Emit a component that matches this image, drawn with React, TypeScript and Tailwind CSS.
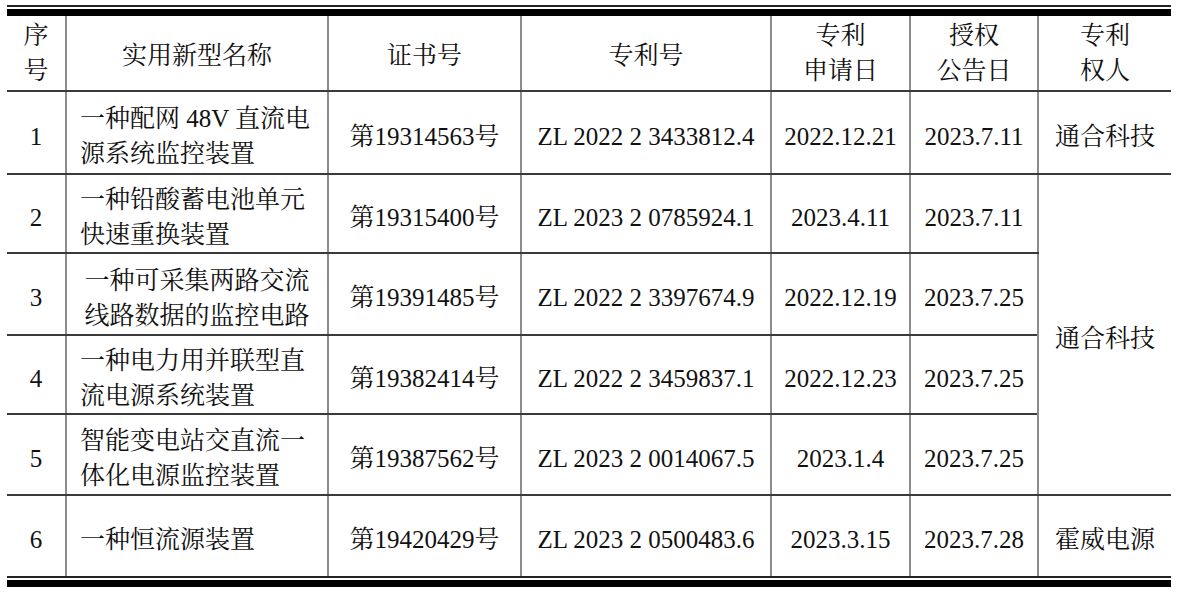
import React from 'react'

const rows = [
  {
    no: '1',
    name: ['一种配网 48V 直流电', '源系统监控装置'],
    cert: '第19314563号',
    patent: 'ZL 2022 2 3433812.4',
    apply: '2022.12.21',
    grant: '2023.7.11',
    h: 'h-[83px]',
  },
  {
    no: '2',
    name: ['一种铅酸蓄电池单元', '快速重换装置'],
    cert: '第19315400号',
    patent: 'ZL 2023 2 0785924.1',
    apply: '2023.4.11',
    grant: '2023.7.11',
    h: 'h-[79px]',
  },
  {
    no: '3',
    name: ['一种可采集两路交流', '线路数据的监控电路'],
    cert: '第19391485号',
    patent: 'ZL 2022 2 3397674.9',
    apply: '2022.12.19',
    grant: '2023.7.25',
    h: 'h-[82px]',
    center: true,
  },
  {
    no: '4',
    name: ['一种电力用并联型直', '流电源系统装置'],
    cert: '第19382414号',
    patent: 'ZL 2022 2 3459837.1',
    apply: '2022.12.23',
    grant: '2023.7.25',
    h: 'h-[79px]',
  },
  {
    no: '5',
    name: ['智能变电站交直流一', '体化电源监控装置'],
    cert: '第19387562号',
    patent: 'ZL 2023 2 0014067.5',
    apply: '2023.1.4',
    grant: '2023.7.25',
    h: 'h-[81px]',
  },
  {
    no: '6',
    name: ['一种恒流源装置'],
    cert: '第19420429号',
    patent: 'ZL 2023 2 0500483.6',
    apply: '2023.3.15',
    grant: '2023.7.28',
    h: 'h-[81px]',
  },
]

// vertical rules are grey, horizontal ones darker
const cell =
  'p-0 align-middle text-center border-y-[2px] border-y-[#3a3a3a] border-x-[2px] border-x-[#8c8c8c]'
const td = `${cell} pt-[7px]`

export default function App() {
  return (
    <div
      className="min-h-[593px] w-[1190px] bg-white text-[#111] pt-[5px] pl-[7px]"
      style={{ fontFamily: '"Liberation Serif", "Noto Serif CJK SC", "Noto Sans CJK SC", serif' }}
    >
      <div className="w-[1164px]">
        {/* top double rule */}
        <div className="h-[2px] bg-[#222]" />
        <div className="h-[2px]" />
        <div className="h-[7px] bg-black" />

        <table className="w-[1164px] table-fixed border-collapse border-hidden text-[25px] leading-[35px]">
          <colgroup>
            <col className="w-[59px]" />
            <col className="w-[262px]" />
            <col className="w-[193px]" />
            <col className="w-[250px]" />
            <col className="w-[139px]" />
            <col className="w-[128px]" />
            <col className="w-[133px]" />
          </colgroup>
          <thead>
            <tr className="h-[75px]">
              <th className={`${cell} font-normal`}>
                序<br />号
              </th>
              <th className={`${cell} pt-[5px] font-normal`}>实用新型名称</th>
              <th className={`${cell} pt-[5px] font-normal`}>证书号</th>
              <th className={`${cell} pt-[5px] font-normal`}>专利号</th>
              <th className={`${cell} font-normal`}>
                专利<br />申请日
              </th>
              <th className={`${cell} font-normal`}>
                授权<br />公告日
              </th>
              <th className={`${cell} font-normal`}>
                专利<br />权人
              </th>
            </tr>
          </thead>
          <tbody>
            {rows.map((r, i) => (
              <tr key={r.no} className={r.h}>
                <td className={td}>{r.no}</td>
                <td className={`${td} ${r.center ? 'text-center' : 'text-left pl-[13px]'}`}>
                  {r.name.map((l) => (
                    <div key={l}>{l}</div>
                  ))}
                </td>
                <td className={td}>{r.cert}</td>
                <td className={td}>{r.patent}</td>
                <td className={td}>{r.apply}</td>
                <td className={td}>{r.grant}</td>
                {i === 0 && <td className={td}>通合科技</td>}
                {i === 1 && (
                  <td rowSpan={4} className={td}>
                    通合科技
                  </td>
                )}
                {i === 5 && <td className={td}>霍威电源</td>}
              </tr>
            ))}
          </tbody>
        </table>

        {/* bottom double rule */}
        <div className="h-[2px] bg-[#222]" />
        <div className="h-[2px]" />
        <div className="h-[7px] bg-black" />
      </div>
    </div>
  )
}
